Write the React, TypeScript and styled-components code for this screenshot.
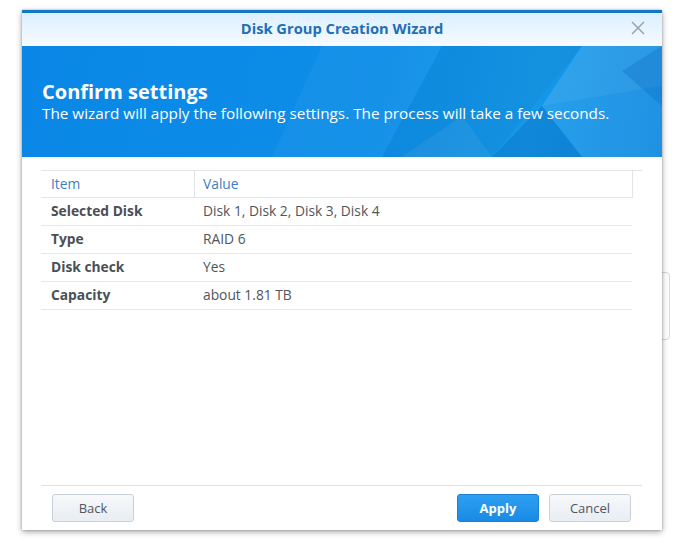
import React from 'react'
import styled, { createGlobalStyle } from 'styled-components'

const rows = [
    { item: 'Selected Disk', value: 'Disk 1, Disk 2, Disk 3, Disk 4' },
    { item: 'Type', value: 'RAID 6' },
    { item: 'Disk check', value: 'Yes' },
    { item: 'Capacity', value: 'about 1.81 TB' },
]

function BannerArt() {
    return (
        <ArtSvg viewBox='0 0 640 111' preserveAspectRatio='none'>
            <polygon points='300,0 420,0 360,111 250,111' fill='#ffffff' opacity='0.04' />
            <polygon points='420,0 560,0 470,111 360,111' fill='#000000' opacity='0.04' />
            <polygon points='560,0 640,0 640,40 520,60' fill='#ffffff' opacity='0.12' />
            <polygon points='520,60 640,40 640,111 560,111' fill='#ffffff' opacity='0.08' />
            <polygon points='470,111 520,60 560,111' fill='#003f8a' opacity='0.18' />
            <polygon points='600,25 640,0 640,60' fill='#0060b8' opacity='0.25' />
            <polygon points='380,111 470,111 440,70' fill='#ffffff' opacity='0.06' />
        </ArtSvg>
    )
}

function App() {
    return (
        <>
            <GlobalStyle />
            <Desktop>
                <Peek />
                <Window>
                    <TitleBar>
                        <Title>Disk Group Creation Wizard</Title>
                        <CloseButton aria-label='close'>
                            <svg width='14' height='14' viewBox='0 0 14 14'>
                                <path d='M1 1 L13 13 M13 1 L1 13' stroke='#9aa3ab' strokeWidth='1.5' fill='none' />
                            </svg>
                        </CloseButton>
                    </TitleBar>
                    <Banner>
                        <BannerArt />
                        <BannerText>
                            <h2>Confirm settings</h2>
                            <p>The wizard will apply the following settings. The process will take a few seconds.</p>
                        </BannerText>
                    </Banner>
                    <Body>
                        <Grid>
                            <HeadCell>Item</HeadCell>
                            <HeadCell $divider>Value</HeadCell>
                            <Gutter />
                            {rows.map((r) => (
                                <React.Fragment key={r.item}>
                                    <ItemCell>{r.item}</ItemCell>
                                    <ValueCell>{r.value}</ValueCell>
                                    <Blank />
                                </React.Fragment>
                            ))}
                        </Grid>
                    </Body>
                    <Footer>
                        <Button>Back</Button>
                        <Spacer />
                        <Button $primary>Apply</Button>
                        <Button>Cancel</Button>
                    </Footer>
                </Window>
            </Desktop>
        </>
    )
}

export default App

const GlobalStyle = createGlobalStyle`
    html, body {
        margin: 0;
        background: #ffffff;
    }
    body {
        font-family: 'Open Sans', 'Liberation Sans', sans-serif;
    }
    * {
        box-sizing: border-box;
    }
`

const Desktop = styled.div`
    position: relative;
    width: 680px;
    height: 547px;
    padding: 10px 0 0 22px;
    overflow: hidden;
`

const Peek = styled.div`
    position: absolute;
    left: 650px;
    top: 272px;
    width: 20px;
    height: 68px;
    border: 1px solid #d4d8dc;
    border-radius: 4px;
    background: #ffffff;
`

const Window = styled.div`
    position: relative;
    width: 640px;
    height: 520px;
    display: flex;
    flex-direction: column;
    background: #ffffff;
    border-top: 3px solid #1178c8;
    box-shadow: 0 2px 6px rgba(0, 0, 0, 0.35), 0 0 2px rgba(0, 0, 0, 0.25);
`

const TitleBar = styled.div`
    height: 33px;
    flex: none;
    display: flex;
    align-items: center;
    justify-content: center;
    position: relative;
    padding-bottom: 4px;
    background: linear-gradient(to bottom, #dcefff 0%, #f6fbff 100%);
`

const Title = styled.div`
    font-size: 14.7px;
    font-weight: 700;
    color: #1f6fb5;
`

const CloseButton = styled.div`
    position: absolute;
    right: 17px;
    top: 8px;
    display: flex;
`

const Banner = styled.div`
    position: relative;
    height: 111px;
    flex: none;
    background: linear-gradient(100deg, #0a87e6 0%, #0d8de8 55%, #1598ea 80%, #0e88e0 100%);
    overflow: hidden;
`

const ArtSvg = styled.svg`
    position: absolute;
    inset: 0;
    width: 100%;
    height: 100%;
`

const BannerText = styled.div`
    position: relative;
    padding: 34px 20px 0 20px;
    color: #ffffff;

    h2 {
        margin: 0;
        font-size: 20px;
        font-weight: 700;
        line-height: 24px;
    }

    p {
        margin: 0;
        font-size: 15.3px;
        line-height: 19px;
    }
`

const Body = styled.div`
    flex: 1;
    padding: 13px 20px 0 19px;
`

const Grid = styled.div`
    display: grid;
    grid-template-columns: 153px 438px 10px;
    font-size: 13.8px;
    border-top: 1px solid #e2e5e8;
`

const HeadCell = styled.div<{ $divider?: boolean }>`
    height: 27px;
    display: flex;
    align-items: center;
    padding-left: ${(p) => (p.$divider ? '8px' : '10px')};
    padding-bottom: 2px;
    color: #3b80c4;
    border-bottom: 1px solid #e2e5e8;
    border-left: ${(p) => (p.$divider ? '1px solid #e2e5e8' : 'none')};
`

const Gutter = styled.div`
    height: 27px;
    border-left: 1px solid #e2e5e8;
`

const ItemCell = styled.div`
    height: 28px;
    display: flex;
    align-items: center;
    padding-left: 10px;
    padding-bottom: 2px;
    font-weight: 700;
    color: #4a4f55;
    border-bottom: 1px solid #e6e8ea;
`

const ValueCell = styled.div`
    height: 28px;
    display: flex;
    align-items: center;
    padding-left: 9px;
    padding-bottom: 2px;
    color: #50565c;
    border-bottom: 1px solid #e6e8ea;
`

const Blank = styled.div``

const Footer = styled.div`
    height: 45px;
    flex: none;
    margin: 0 20px 0 19px;
    border-top: 1px solid #dde1e5;
    display: flex;
    align-items: flex-start;
    padding: 8px 11px 0 11px;
    gap: 10px;
`

const Spacer = styled.div`
    flex: 1;
`

const Button = styled.button<{ $primary?: boolean }>`
    width: 82px;
    height: 28px;
    border-radius: 3px;
    font-family: inherit;
    font-size: 13px;
    font-weight: ${(p) => (p.$primary ? 700 : 400)};
    color: ${(p) => (p.$primary ? '#ffffff' : '#50565c')};
    border: 1px solid ${(p) => (p.$primary ? '#1c7fd2' : '#c9d1d8')};
    background: ${(p) =>
        p.$primary
            ? 'linear-gradient(to bottom, #2da0f2 0%, #1a8ae4 100%)'
            : 'linear-gradient(to bottom, #f7f9fb 0%, #e8edf2 100%)'};
`
